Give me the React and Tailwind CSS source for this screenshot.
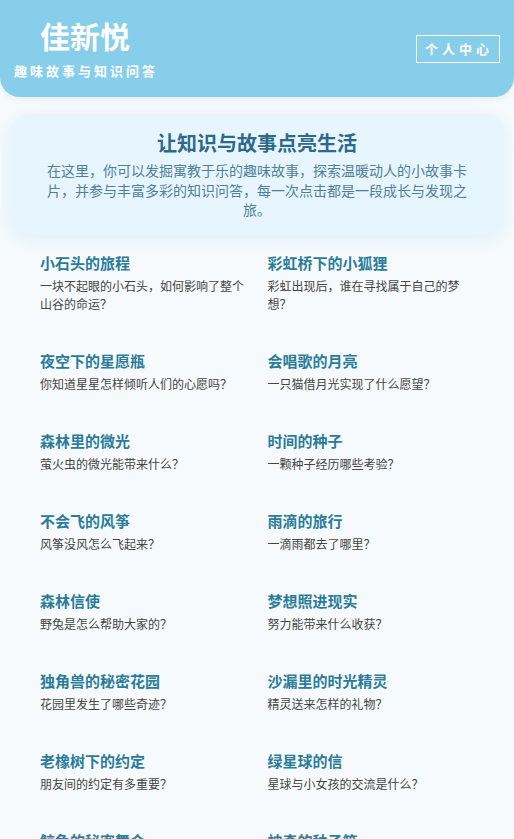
import React from "react";

const stories = [
  { title: "小石头的旅程", desc: "一块不起眼的小石头，如何影响了整个山谷的命运？" },
  { title: "彩虹桥下的小狐狸", desc: "彩虹出现后，谁在寻找属于自己的梦想？" },
  { title: "夜空下的星愿瓶", desc: "你知道星星怎样倾听人们的心愿吗？" },
  { title: "会唱歌的月亮", desc: "一只猫借月光实现了什么愿望？" },
  { title: "森林里的微光", desc: "萤火虫的微光能带来什么？" },
  { title: "时间的种子", desc: "一颗种子经历哪些考验？" },
  { title: "不会飞的风筝", desc: "风筝没风怎么飞起来？" },
  { title: "雨滴的旅行", desc: "一滴雨都去了哪里？" },
  { title: "森林信使", desc: "野兔是怎么帮助大家的？" },
  { title: "梦想照进现实", desc: "努力能带来什么收获？" },
  { title: "独角兽的秘密花园", desc: "花园里发生了哪些奇迹？" },
  { title: "沙漏里的时光精灵", desc: "精灵送来怎样的礼物？" },
  { title: "老橡树下的约定", desc: "朋友间的约定有多重要？" },
  { title: "绿星球的信", desc: "星球与小女孩的交流是什么？" },
  { title: "鲸鱼的秘密舞会", desc: "海底深处藏着怎样的欢乐？" },
  { title: "神奇的种子箱", desc: "每一颗种子会长成什么？" },
];

const App = () => {
  return (
    <div className="min-h-screen bg-[#f6fafc] font-['Noto_Sans_CJK_SC','Noto_Sans',sans-serif]">
      <header className="flex items-center justify-between h-[97px] px-[14px] bg-[#87ceeb] rounded-b-[20px] shadow-[0_2px_6px_rgba(0,0,0,0.06)]">
        <div className="flex flex-col">
          <h1 className="pl-[26px] text-[30px] leading-[36px] font-bold text-white">佳新悦</h1>
          <p className="mt-[9px] text-[13px] leading-[18px] font-bold tracking-[3px] text-white">
            趣味故事与知识问答
          </p>
        </div>
        <button className="h-[28px] pl-[8px] pr-[6px] border border-white text-white text-[13px] leading-[20px] font-bold tracking-[4px]">
          个人中心
        </button>
      </header>

      <main className="px-[10px] pt-[17px]">
        <section className="rounded-[20px] bg-[#e7f6fe] px-[25px] pt-[15px] pb-[15px] text-center shadow-[0_4px_18px_rgba(135,206,235,0.22)]">
          <h2 className="text-[20px] leading-[28px] font-bold text-[#2c6a8c]">让知识与故事点亮生活</h2>
          <p className="mt-[4px] text-[14px] leading-[19.5px] text-[#4f7f9c]">
            在这里，你可以发掘寓教于乐的趣味故事，探索温暖动人的小故事卡片，并参与丰富多彩的知识问答，每一次点击都是一段成长与发现之旅。
          </p>
        </section>

        <div className="grid grid-cols-2 gap-x-[21px] gap-y-[37px] px-[30px] pt-[17px] pb-10">
          {stories.map((s, i) => (
            <div key={i}>
              <h3 className="text-[15px] leading-[22px] font-bold text-[#2a7c9a]">{s.title}</h3>
              <p className="mt-[3px] text-[12px] leading-[18px] text-[#444]">{s.desc}</p>
            </div>
          ))}
        </div>
      </main>
    </div>
  );
};

export default App;
